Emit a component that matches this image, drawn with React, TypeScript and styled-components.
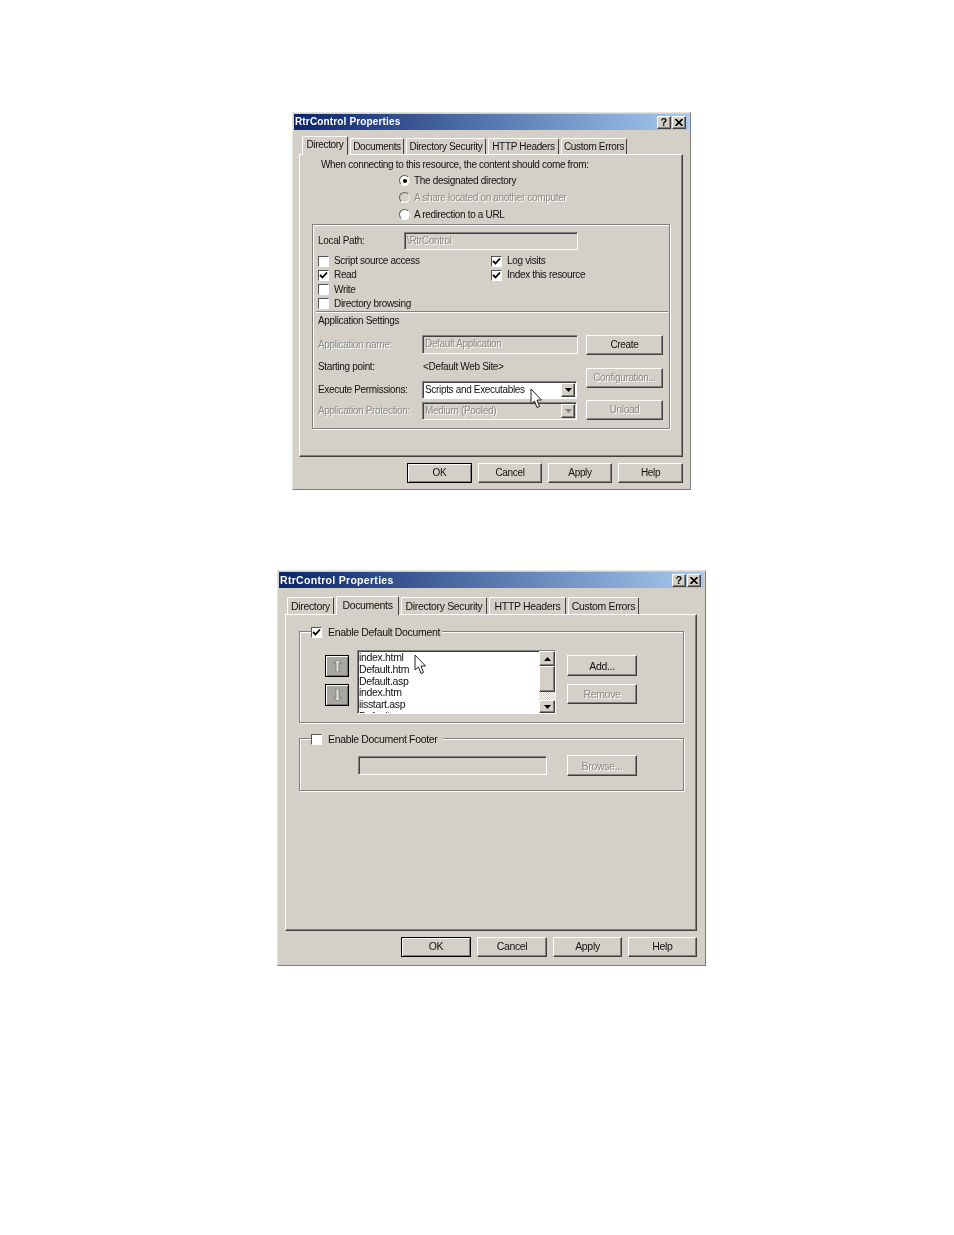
import styled, { createGlobalStyle, css } from "styled-components";

const FACE = "#d4d0c8";

const raised = css`
  border-style: solid;
  border-width: 1px;
  border-color: #ffffff #404040 #404040 #ffffff;
  box-shadow: inset -1px -1px 0 #808080;
`;

const sunken = css`
  border-style: solid;
  border-width: 1px;
  border-color: #808080 #ffffff #ffffff #808080;
  box-shadow: inset 1px 1px 0 #404040;
`;

const disabledText = css`
  color: #8a8a86;
  text-shadow: 1px 1px 0 #ffffff;
`;

const GlobalStyle = createGlobalStyle`
  html, body {
    margin: 0;
    background: #ffffff;
  }
  * {
    box-sizing: border-box;
  }
`;

const Page = styled.div`
  display: flex;
  flex-direction: column;
  align-items: center;
  gap: 80px;
  min-height: 1235px;
  padding: 112px 0 0 29px;
  font-family: "Liberation Sans", Arial, sans-serif;
  color: #111111;
`;

const Dialog = styled.div<{ $width: number; $height: number; $size: number }>`
  width: ${({ $width }) => $width}px;
  height: ${({ $height }) => $height}px;
  padding: 1px;
  background: ${FACE};
  border: 1px solid;
  border-color: #e4e2dc #7c7c7c #7c7c7c #e4e2dc;
  font-size: ${({ $size }) => $size}px;
  line-height: 14px;
  letter-spacing: -0.33px;
  white-space: nowrap;
  filter: blur(0.3px);
`;

const TitleBar = styled.div<{ $spacing: number }>`
  display: flex;
  align-items: center;
  justify-content: space-between;
  height: 16px;
  padding: 0 3px 0 1px;
  background: linear-gradient(90deg, #0a246a, #a6caf0);
  color: #ffffff;
  font-weight: 700;
  letter-spacing: ${({ $spacing }) => $spacing}px;
`;

const TitleButtons = styled.div`
  display: flex;
  gap: 1px;
`;

const TitleButton = styled.div`
  ${raised}
  display: flex;
  align-items: center;
  justify-content: center;
  width: 14px;
  height: 13px;
  background: ${FACE};
  color: #000000;
  font-size: 11px;
  font-weight: 700;
`;

const Body = styled.div<{ $left: number; $right: number }>`
  padding: 0 ${({ $right }) => $right}px 0 ${({ $left }) => $left}px;
`;

const TabStrip = styled.div<{ $top: number; $left: number; $gap: number }>`
  display: flex;
  align-items: flex-end;
  gap: ${({ $gap }) => $gap}px;
  height: 18px;
  margin-top: ${({ $top }) => $top}px;
  padding-left: ${({ $left }) => $left}px;
`;

const Tab = styled.div<{ $width: number; $active?: boolean; $tall?: boolean }>`
  position: relative;
  display: flex;
  align-items: center;
  justify-content: center;
  width: ${({ $width }) => $width}px;
  height: ${({ $active, $tall }) => ($active ? 19 : $tall ? 17 : 16)}px;
  margin-bottom: ${({ $active }) => ($active ? -1 : 0)}px;
  padding-bottom: ${({ $active }) => ($active ? 3 : 0)}px;
  background: ${FACE};
  border-style: solid;
  border-width: 1px 1px 0;
  border-color: #ffffff #404040 ${FACE} #ffffff;
  border-radius: 2px 2px 0 0;
  z-index: ${({ $active }) => ($active ? 1 : 0)};
`;

const Panel = styled.div<{ $height: number }>`
  ${raised}
  height: ${({ $height }) => $height}px;
  padding-top: 2px;
`;

const Prompt = styled.div`
  margin-left: 21px;
  padding-top: 1px;
`;

const RadioList = styled.div`
  display: flex;
  flex-direction: column;
  margin-left: 99px;
`;

const RadioRow = styled.div<{ $off?: boolean }>`
  display: flex;
  align-items: center;
  gap: 4px;
  height: 17px;
  ${({ $off }) => $off && disabledText}
`;

const Radio = styled.span<{ $off?: boolean }>`
  display: flex;
  align-items: center;
  justify-content: center;
  width: 11px;
  height: 11px;
  border-radius: 50%;
  border: 1px solid;
  border-color: #606060 #e8e8e8 #ffffff #606060;
  background: ${({ $off }) => ($off ? FACE : "#ffffff")};
`;

const RadioDot = styled.span`
  width: 4px;
  height: 4px;
  border-radius: 50%;
  background: #000000;
`;

const Box = styled.div`
  display: block;
  width: 358px;
  height: 205px;
  margin: 1px 0 0 12px;
  padding: 7px 4px 0 5px;
  border: 1px solid #808080;
  box-shadow: inset 1px 1px 0 #ffffff, 1px 1px 0 #ffffff;
`;

const FormRow = styled.div<{ $height: number; $top?: number; $label: number }>`
  display: grid;
  grid-template-columns: ${({ $label }) => $label}px 1fr;
  align-items: center;
  height: ${({ $height }) => $height}px;
  margin-top: ${({ $top }) => $top ?? 0}px;
`;

const Label = styled.span<{ $off?: boolean }>`
  ${({ $off }) => $off && disabledText}
`;

const Field = styled.div<{ $width: number; $height: number; $line?: number }>`
  ${sunken}
  width: ${({ $width }) => $width}px;
  height: ${({ $height }) => $height}px;
  padding-left: 2px;
  line-height: ${({ $height, $line }) => $line ?? $height - 2}px;
  ${disabledText}
`;

const CheckGrid = styled.div`
  display: grid;
  grid-template-columns: 173px 1fr;
  grid-auto-rows: 14.25px;
  margin-top: 4px;
`;

const CheckRow = styled.div`
  display: flex;
  align-items: center;
  gap: 5px;
  height: 14px;
`;

const CheckBox = styled.span`
  display: flex;
  flex: none;
  align-items: center;
  justify-content: center;
  width: 11px;
  height: 11px;
  background: #ffffff;
  border: 1px solid;
  border-color: #555555 #ffffff #ffffff #555555;
`;

const Divider = styled.div`
  height: 2px;
  margin: 0 -3px 1px -2px;
  background: #808080;
  border-bottom: 1px solid #ffffff;
`;

const SettingsGrid = styled.div`
  display: grid;
  grid-template-columns: 268px 77px;
  margin-top: 7px;
`;

const SideButtons = styled.div<{ $gap: number; $top?: number }>`
  display: flex;
  flex-direction: column;
  gap: ${({ $gap }) => $gap}px;
  margin-top: ${({ $top }) => $top ?? 0}px;
`;

const Button = styled.div<{ $width: number; $height?: number; $default?: boolean; $off?: boolean }>`
  ${raised}
  display: flex;
  align-items: center;
  justify-content: center;
  width: ${({ $width }) => $width}px;
  height: ${({ $height }) => $height ?? 20}px;
  background: ${FACE};
  ${({ $off }) => $off && disabledText}
  ${({ $default }) =>
    $default &&
    css`
      border-color: #000000;
      box-shadow: inset 1px 1px 0 #ffffff, inset -1px -1px 0 #808080;
    `}
`;

const Footer = styled.div<{ $gap: number; $lift?: boolean }>`
  display: flex;
  justify-content: flex-end;
  gap: ${({ $gap }) => $gap}px;
  margin-top: 6px;

  & > div {
    padding-bottom: ${({ $lift }) => ($lift ? 2 : 0)}px;
  }
`;

const Select = styled.div<{ $off?: boolean }>`
  ${sunken}
  position: relative;
  display: flex;
  align-items: center;
  justify-content: space-between;
  width: 155px;
  height: 18px;
  padding: 1px 1px 1px 2px;
  background: ${({ $off }) => ($off ? FACE : "#ffffff")};
  ${({ $off }) => $off && disabledText}
`;

const SelectArrow = styled.span`
  ${raised}
  display: flex;
  align-items: center;
  justify-content: center;
  width: 14px;
  height: 14px;
  background: ${FACE};
`;

const Pointer = styled.svg<{ $left: number; $top: number }>`
  position: absolute;
  left: ${({ $left }) => $left}px;
  top: ${({ $top }) => $top}px;
  z-index: 2;
`;

const Group = styled.fieldset<{ $top?: number }>`
  width: 385px;
  margin: ${({ $top }) => $top ?? 0}px 0 0 13px;
  padding: 0;
  border: 1px solid #808080;
  box-shadow: inset 1px 1px 0 #ffffff, 1px 1px 0 #ffffff;
`;

// the legend sits a pixel below the group's top line in the reference
const GroupLegend = styled.legend<{ $end: number }>`
  position: relative;
  top: 1px;
  display: flex;
  align-items: center;
  gap: 6px;
  height: 14px;
  margin-left: 11px;
  padding: 0 ${({ $end }) => $end}px 0 0;
  background: ${FACE};
`;

const ListRow = styled.div`
  display: flex;
  align-items: flex-start;
  padding: 12px 0 8px 25px;
`;

const MoveButtons = styled.div`
  display: flex;
  flex-direction: column;
  gap: 7px;
  margin: 5px 8px 0 0;
`;

const MoveButton = styled.div`
  display: flex;
  align-items: center;
  justify-content: center;
  width: 24px;
  height: 22px;
  background: #a8a6a0;
  border: 1px solid #000000;
  box-shadow: inset 1px 1px 0 #ffffff, inset -1px -1px 0 #707070;
`;

const ListBox = styled.div`
  ${sunken}
  position: relative;
  display: flex;
  justify-content: space-between;
  width: 199px;
  height: 64px;
  margin-right: 11px;
  background: #ffffff;
`;

const ListItems = styled.div`
  flex: 1;
  height: 61px;
  margin-top: 1px;
  padding-left: 1px;
  overflow: hidden;
  line-height: 11.8px;
`;

const ScrollBar = styled.div`
  display: flex;
  flex-direction: column;
  width: 16px;
  height: 62px;
  background: repeating-conic-gradient(#ffffff 0 25%, ${FACE} 0 50%) 0 0 / 2px 2px;
`;

const ScrollButton = styled.div<{ $height: number }>`
  ${raised}
  display: flex;
  align-items: center;
  justify-content: center;
  height: ${({ $height }) => $height}px;
  background: ${FACE};
`;

const ScrollGap = styled.div`
  flex: 1;
`;

const FooterRow = styled.div`
  display: flex;
  align-items: center;
  padding: 10px 0 14px 58px;
`;

const FooterField = styled(Field)`
  margin-right: 20px;
`;

const Triangle = ({ up, color = "#000000" }: { up?: boolean; color?: string }) => (
  <svg width="7" height="4" viewBox="0 0 7 4">
    <path d={up ? "M3.5 0L7 4H0Z" : "M0 0H7L3.5 4Z"} fill={color} />
  </svg>
);

const Check = () => (
  <svg width="9" height="9" viewBox="0 0 9 9">
    <path d="M1 4L3.5 6.5L8 1.5" fill="none" stroke="#000000" strokeWidth="1.8" />
  </svg>
);

const MoveArrow = ({ down }: { down?: boolean }) => (
  <svg width="9" height="12" viewBox="0 0 9 12">
    <path
      d={down ? "M3 0H6V9H8.5L4.5 12L0.5 9H3Z" : "M4.5 0L8.5 3H6V12H3V3H0.5Z"}
      fill="#e2e0da"
      stroke="#6c6a66"
      strokeWidth="0.7"
    />
  </svg>
);

const Cursor = ({ left, top }: { left: number; top: number }) => (
  <Pointer $left={left} $top={top} width="13" height="21" viewBox="0 0 13 21">
    <path
      d="M1 1V16L4.5 13L7 19.5L9.5 18.5L7 12H11.5Z"
      fill="#ffffff"
      stroke="#222222"
      strokeWidth="1"
    />
  </Pointer>
);

const Title = ({ spacing }: { spacing: number }) => (
  <TitleBar $spacing={spacing}>
    <span>RtrControl Properties</span>
    <TitleButtons>
      <TitleButton>?</TitleButton>
      <TitleButton>
        <svg width="8" height="7" viewBox="0 0 8 7">
          <path d="M0.5 0L7.5 7M7.5 0L0.5 7" stroke="#000000" strokeWidth="1.6" />
        </svg>
      </TitleButton>
    </TitleButtons>
  </TitleBar>
);

const firstTabs = [
  { label: "Directory", width: 46, active: true },
  { label: "Documents", width: 54 },
  { label: "Directory Security", width: 80 },
  { label: "HTTP Headers", width: 71 },
  { label: "Custom Errors", width: 66 },
];

const secondTabs = [
  { label: "Directory", width: 47 },
  { label: "Documents", width: 63, active: true },
  { label: "Directory Security", width: 86 },
  { label: "HTTP Headers", width: 77 },
  { label: "Custom Errors", width: 71 },
];

export default function App() {
  return (
    <Page>
      <GlobalStyle />

      <Dialog $width={399} $height={378} $size={10}>
        <Title spacing={0.15} />
        <Body $left={5} $right={6}>
          <TabStrip $top={6} $left={3} $gap={2}>
            {firstTabs.map((t) => (
              <Tab key={t.label} $width={t.width} $active={t.active}>
                {t.label}
              </Tab>
            ))}
          </TabStrip>
          <Panel $height={303}>
            <Prompt>When connecting to this resource, the content should come from:</Prompt>
            <RadioList>
              <RadioRow>
                <Radio>
                  <RadioDot />
                </Radio>
                The designated directory
              </RadioRow>
              <RadioRow $off>
                <Radio $off />A share located on another computer
              </RadioRow>
              <RadioRow>
                <Radio />A redirection to a URL
              </RadioRow>
            </RadioList>

            <Box>
              <FormRow $height={18} $label={86}>
                <Label>Local Path:</Label>
                <Field $width={174} $height={18}>
                  \RtrControl
                </Field>
              </FormRow>
              <CheckGrid>
                <CheckRow>
                  <CheckBox />
                  Script source access
                </CheckRow>
                <CheckRow>
                  <CheckBox>
                    <Check />
                  </CheckBox>
                  Log visits
                </CheckRow>
                <CheckRow>
                  <CheckBox>
                    <Check />
                  </CheckBox>
                  Read
                </CheckRow>
                <CheckRow>
                  <CheckBox>
                    <Check />
                  </CheckBox>
                  Index this resource
                </CheckRow>
                <CheckRow>
                  <CheckBox />
                  Write
                </CheckRow>
                <span />
                <CheckRow>
                  <CheckBox />
                  Directory browsing
                </CheckRow>
              </CheckGrid>
              <Divider />
              <div>Application Settings</div>
              <SettingsGrid>
                <div>
                  <FormRow $height={19} $label={104}>
                    <Label $off>Application name:</Label>
                    <Field $width={156} $height={19} $line={15}>
                      Default Application
                    </Field>
                  </FormRow>
                  <FormRow $height={14} $top={6} $label={105}>
                    <Label>Starting point:</Label>
                    <span>&lt;Default Web Site&gt;</span>
                  </FormRow>
                  <FormRow $height={18} $top={7} $label={104}>
                    <Label>Execute Permissions:</Label>
                    <Select>
                      Scripts and Executables
                      <SelectArrow>
                        <Triangle />
                      </SelectArrow>
                      <Cursor left={107} top={6} />
                    </Select>
                  </FormRow>
                  <FormRow $height={18} $top={3} $label={104}>
                    <Label $off>Application Protection:</Label>
                    <Select $off>
                      Medium (Pooled)
                      <SelectArrow>
                        <Triangle color="#808080" />
                      </SelectArrow>
                    </Select>
                  </FormRow>
                </div>
                <SideButtons $gap={12.5}>
                  <Button $width={77}>Create</Button>
                  <Button $width={77} $off>
                    Configuration...
                  </Button>
                  <Button $width={77} $off>
                    Unload
                  </Button>
                </SideButtons>
              </SettingsGrid>
            </Box>
          </Panel>
          <Footer $gap={6}>
            <Button $width={65} $default>
              OK
            </Button>
            <Button $width={64}>Cancel</Button>
            <Button $width={64}>Apply</Button>
            <Button $width={65}>Help</Button>
          </Footer>
        </Body>
      </Dialog>

      <Dialog $width={429} $height={396} $size={10.5}>
        <Title spacing={0.3} />
        <Body $left={6} $right={7}>
          <TabStrip $top={8} $left={2} $gap={2}>
            {secondTabs.map((t) => (
              <Tab key={t.label} $width={t.width} $active={t.active} $tall>
                {t.label}
              </Tab>
            ))}
          </TabStrip>
          <Panel $height={317}>
            <Group $top={7}>
              <GroupLegend $end={2}>
                <CheckBox>
                  <Check />
                </CheckBox>
                Enable Default Document
              </GroupLegend>
              <ListRow>
                <MoveButtons>
                  <MoveButton>
                    <MoveArrow />
                  </MoveButton>
                  <MoveButton>
                    <MoveArrow down />
                  </MoveButton>
                </MoveButtons>
                <ListBox>
                  <ListItems>
                    <div>index.html</div>
                    <div>Default.htm</div>
                    <div>Default.asp</div>
                    <div>index.htm</div>
                    <div>iisstart.asp</div>
                    <div>Default.aspx</div>
                  </ListItems>
                  <ScrollBar>
                    <ScrollButton $height={15}>
                      <Triangle up />
                    </ScrollButton>
                    <ScrollButton $height={26} />
                    <ScrollGap />
                    <ScrollButton $height={13}>
                      <Triangle />
                    </ScrollButton>
                  </ScrollBar>
                  <Cursor left={56} top={3} />
                </ListBox>
                <SideButtons $gap={8} $top={5}>
                  <Button $width={70} $height={21}>
                    Add...
                  </Button>
                  <Button $width={70} $off>
                    Remove
                  </Button>
                </SideButtons>
              </ListRow>
            </Group>
            <Group $top={8}>
              <GroupLegend $end={6}>
                <CheckBox />
                Enable Document Footer
              </GroupLegend>
              <FooterRow>
                <FooterField $width={189} $height={19} />
                <Button $width={70} $height={21} $off>
                  Browse...
                </Button>
              </FooterRow>
            </Group>
          </Panel>
          <Footer $gap={6} $lift>
            <Button $width={70} $default>
              OK
            </Button>
            <Button $width={70}>Cancel</Button>
            <Button $width={69}>Apply</Button>
            <Button $width={69}>Help</Button>
          </Footer>
        </Body>
      </Dialog>
    </Page>
  );
}
